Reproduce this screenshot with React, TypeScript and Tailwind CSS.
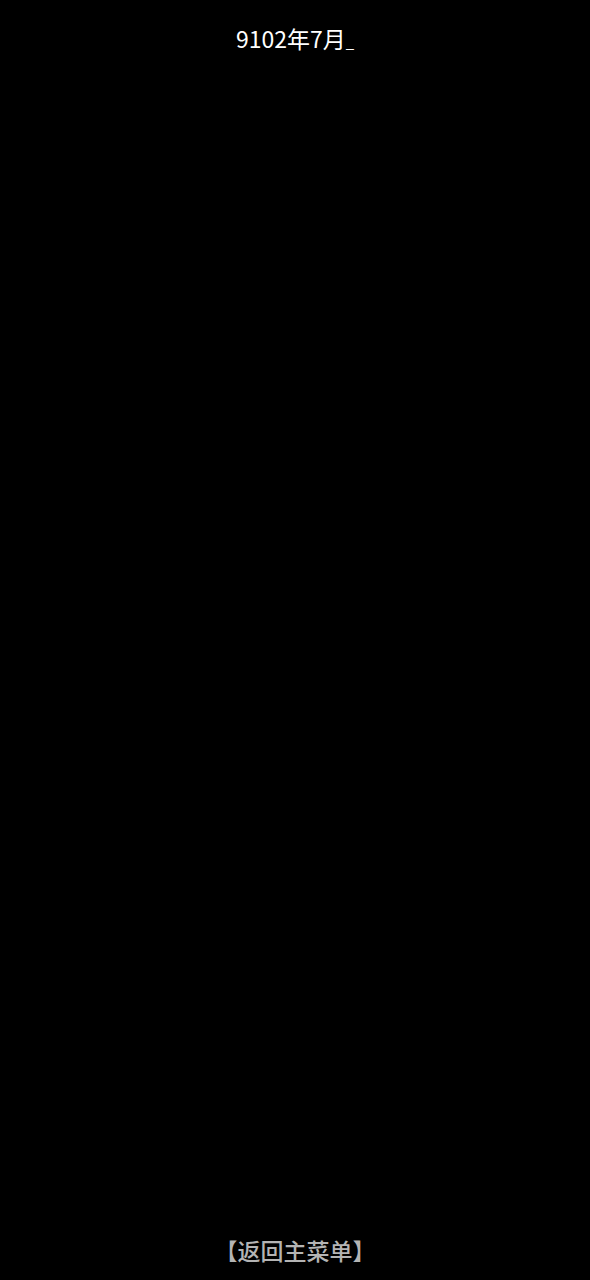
import React from 'react';

export default function App() {
  return (
    <div
      className="flex h-[1280px] w-full flex-col items-center justify-between bg-black pt-[23px] pb-[15px]"
      style={{ fontFamily: '"Noto Sans CJK SC", "Noto Sans", sans-serif' }}
    >
      <div className="text-[23px] leading-[30px] text-white">
        9102年7月<span className="text-[15px]">_</span>
      </div>
      <button className="text-[23px] font-medium leading-[30px] text-[#b4b4b4]">【返回主菜单】</button>
    </div>
  );
}
